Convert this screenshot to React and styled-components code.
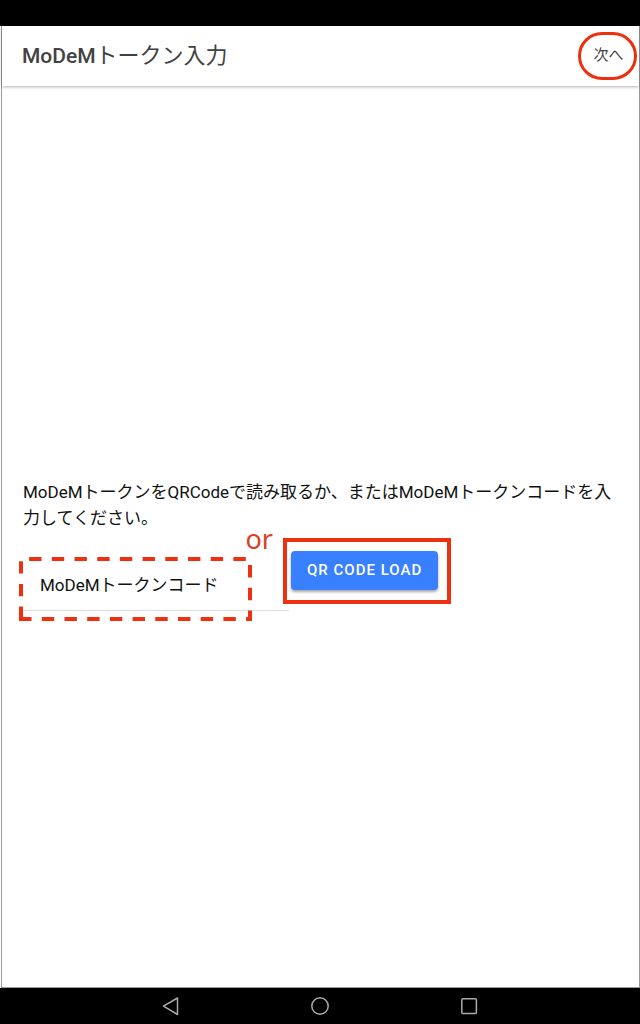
import React from 'react';
import styled, { createGlobalStyle } from 'styled-components';

const GlobalStyle = createGlobalStyle`
  * {
    box-sizing: border-box;
  }
  body {
    margin: 0;
    background: #fff;
    color: #111;
    font-family: Roboto, 'Noto Sans CJK JP', sans-serif;
  }
`;

const PageStyles = styled.div`
  display: flex;
  flex-direction: column;
  min-height: 100vh;
`;

const StatusBar = styled.div`
  height: 26px;
  background: #000;
`;

const Screen = styled.div`
  flex: 1;
  display: flex;
  flex-direction: column;
  margin-left: 1px;
  border: 1px solid #999;
  border-top: 0;
`;

const Toolbar = styled.header`
  display: flex;
  align-items: center;
  justify-content: space-between;
  height: 60px;
  padding: 0 2px 0 20px;
  box-shadow: 0 1px 3px rgba(0, 0, 0, 0.3);
`;

const Title = styled.h1`
  margin: 0;
  color: #424242;
  font-size: 22px;
  font-weight: 400;
  line-height: 28px;
  span {
    font-size: 21px;
    font-weight: 500;
  }
`;

const NextButton = styled.button`
  width: 59px;
  height: 48px;
  padding: 0 0 6px 2px;
  border: 3px solid #ec3010;
  border-radius: 24px;
  background: none;
  color: #424242;
  font-family: inherit;
  font-size: 15px;
`;

const Content = styled.main`
  flex: 1;
  display: flex;
  flex-direction: column;
  justify-content: center;
  padding: 16px 21px 0;
`;

const PText = styled.p`
  margin: 0 0 7px;
  font-size: 17px;
  line-height: 26px;
`;

const FormRow = styled.div`
  display: flex;
  align-items: flex-start;
`;

const Field = styled.div`
  position: relative;
  flex: 0 0 266px;
  min-width: 0;
  display: flex;
  align-items: center;
  height: 54px;
  margin-top: 19px;
  padding-left: 17px;
  border-bottom: 1px solid #ddd;
  label {
    flex: none;
    font-size: 17px;
  }
  input {
    flex: 1;
    min-width: 0;
    border: 0;
    outline: 0;
    background: none;
    font: inherit;
  }
`;

const DashedFrame = styled.svg`
  position: absolute;
  left: -4px;
  top: 0;
  pointer-events: none;
`;

const OrMark = styled.span`
  position: absolute;
  right: 16px;
  top: -30px;
  color: #d9402b;
  font-family: 'Noto Sans', sans-serif;
  font-size: 27px;
  line-height: 24px;
`;

const LoadFrame = styled.div`
  margin-left: -6px;
  padding: 9px 9px 10px 4px;
  border: 4px solid #ec3010;
`;

const LoadButton = styled.button`
  display: block;
  height: 39px;
  padding: 0 16px;
  border: 0;
  border-radius: 4px;
  background: #3880ff;
  color: #fff;
  font-family: inherit;
  font-size: 15px;
  font-weight: 500;
  letter-spacing: 1px;
  box-shadow: 0 2px 3px rgba(0, 0, 0, 0.35);
`;

const NavBar = styled.nav`
  display: flex;
  align-items: center;
  justify-content: center;
  gap: 125px;
  height: 36px;
  background: #000;
`;

const NavButton = styled.button`
  display: flex;
  padding: 0;
  border: 0;
  background: none;
  svg {
    fill: none;
    stroke: #aaa;
    stroke-width: 1.5;
    stroke-linejoin: round;
  }
`;

export default function App() {
  return (
    <PageStyles>
      <GlobalStyle />
      <StatusBar />
      <Screen>
        <Toolbar>
          <Title>
            <span>MoDeM</span>トークン入力
          </Title>
          <NextButton type="button">次へ</NextButton>
        </Toolbar>
        <Content>
          <PText>
            MoDeMトークンをQRCodeで読み取るか、またはMoDeMトークンコードを入力してください。
          </PText>
          <FormRow>
            <Field>
              <label htmlFor="token">MoDeMトークンコード</label>
              <input id="token" type="text" />
              <DashedFrame width="234" height="66" aria-hidden="true">
                <path
                  d="M2 62V2H231V62Z"
                  fill="none"
                  stroke="#ec3010"
                  strokeWidth="4"
                  strokeDasharray="12.4 10.3"
                />
              </DashedFrame>
              <OrMark>or</OrMark>
            </Field>
            <LoadFrame>
              <LoadButton type="button">QR CODE LOAD</LoadButton>
            </LoadFrame>
          </FormRow>
        </Content>
      </Screen>
      <NavBar>
        <NavButton type="button" aria-label="Back">
          <svg width="24" height="24" viewBox="0 0 24 24">
            <path d="M18.5 4V20.5L4.5 12.2Z" />
          </svg>
        </NavButton>
        <NavButton type="button" aria-label="Home">
          <svg width="24" height="24" viewBox="0 0 24 24">
            <circle cx="12" cy="12" r="8.2" />
          </svg>
        </NavButton>
        <NavButton type="button" aria-label="Recent apps">
          <svg width="24" height="24" viewBox="0 0 24 24">
            <rect x="4.8" y="4.8" width="14.6" height="14.6" rx="1" />
          </svg>
        </NavButton>
      </NavBar>
    </PageStyles>
  );
}
